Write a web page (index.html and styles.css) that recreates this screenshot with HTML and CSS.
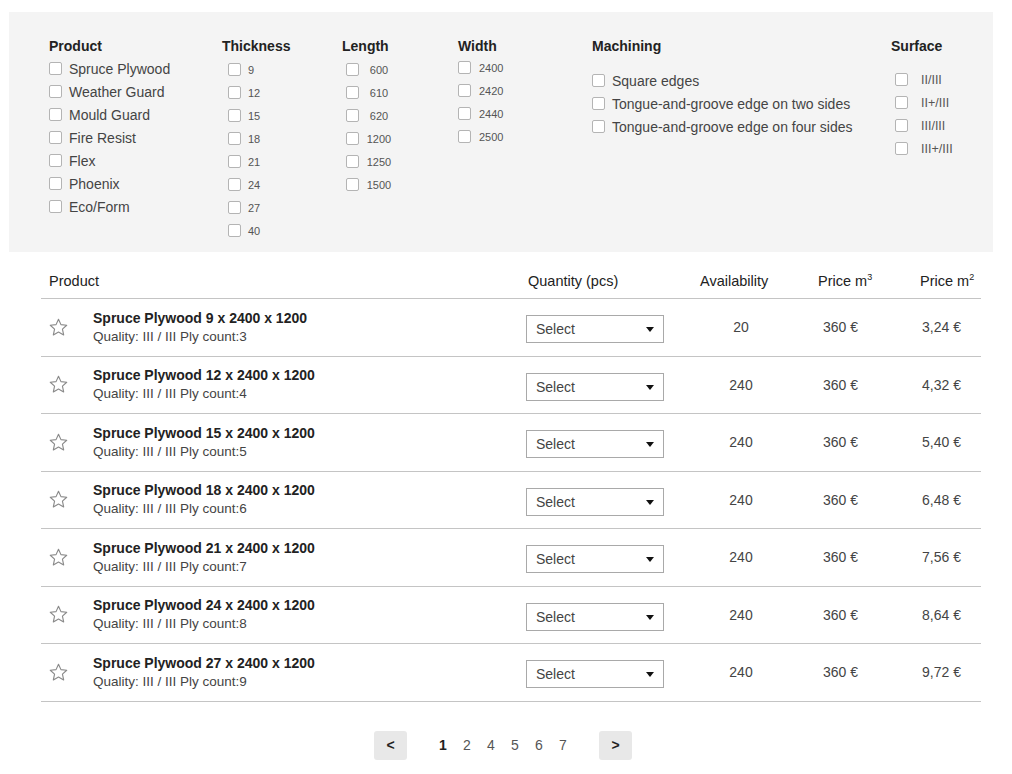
FILE: index.html
```html
<!DOCTYPE html>
<html lang="en">
<head>
<meta charset="utf-8">
<title>Plywood</title>
<link rel="stylesheet" href="styles.css">
</head>
<body>
<section class="filters">
  <div class="fcol col-product">
    <h3 class="fhead">Product</h3>
    <label class="opt"><input type="checkbox" class="cb"><span>Spruce Plywood</span></label>
    <label class="opt"><input type="checkbox" class="cb"><span>Weather Guard</span></label>
    <label class="opt"><input type="checkbox" class="cb"><span>Mould Guard</span></label>
    <label class="opt"><input type="checkbox" class="cb"><span>Fire Resist</span></label>
    <label class="opt"><input type="checkbox" class="cb"><span>Flex</span></label>
    <label class="opt"><input type="checkbox" class="cb"><span>Phoenix</span></label>
    <label class="opt"><input type="checkbox" class="cb"><span>Eco/Form</span></label>
  </div>
  <div class="fcol col-thick">
    <h3 class="fhead">Thickness</h3>
    <label class="opt small"><input type="checkbox" class="cb"><span>9</span></label>
    <label class="opt small"><input type="checkbox" class="cb"><span>12</span></label>
    <label class="opt small"><input type="checkbox" class="cb"><span>15</span></label>
    <label class="opt small"><input type="checkbox" class="cb"><span>18</span></label>
    <label class="opt small"><input type="checkbox" class="cb"><span>21</span></label>
    <label class="opt small"><input type="checkbox" class="cb"><span>24</span></label>
    <label class="opt small"><input type="checkbox" class="cb"><span>27</span></label>
    <label class="opt small"><input type="checkbox" class="cb"><span>40</span></label>
  </div>
  <div class="fcol col-length">
    <h3 class="fhead">Length</h3>
    <label class="opt small"><input type="checkbox" class="cb"><span>600</span></label>
    <label class="opt small"><input type="checkbox" class="cb"><span>610</span></label>
    <label class="opt small"><input type="checkbox" class="cb"><span>620</span></label>
    <label class="opt small"><input type="checkbox" class="cb"><span>1200</span></label>
    <label class="opt small"><input type="checkbox" class="cb"><span>1250</span></label>
    <label class="opt small"><input type="checkbox" class="cb"><span>1500</span></label>
  </div>
  <div class="fcol col-width">
    <h3 class="fhead">Width</h3>
    <div class="shift">
      <label class="opt small"><input type="checkbox" class="cb"><span>2400</span></label>
      <label class="opt small"><input type="checkbox" class="cb"><span>2420</span></label>
      <label class="opt small"><input type="checkbox" class="cb"><span>2440</span></label>
      <label class="opt small"><input type="checkbox" class="cb"><span>2500</span></label>
    </div>
  </div>
  <div class="fcol col-mach">
    <h3 class="fhead">Machining</h3>
    <div class="drop">
      <label class="opt"><input type="checkbox" class="cb"><span>Square edges</span></label>
      <label class="opt"><input type="checkbox" class="cb"><span>Tongue-and-groove edge on two sides</span></label>
      <label class="opt"><input type="checkbox" class="cb"><span>Tongue-and-groove edge on four sides</span></label>
    </div>
  </div>
  <div class="fcol col-surface">
    <h3 class="fhead">Surface</h3>
    <div class="drop-s">
      <label class="opt mid"><input type="checkbox" class="cb"><span>II/III</span></label>
      <label class="opt mid"><input type="checkbox" class="cb"><span>II+/III</span></label>
      <label class="opt mid"><input type="checkbox" class="cb"><span>III/III</span></label>
      <label class="opt mid"><input type="checkbox" class="cb"><span>III+/III</span></label>
    </div>
  </div>
</section>

<section class="table">
  <div class="thead">
    <div class="th th-product">Product</div>
    <div class="th th-qty">Quantity (pcs)</div>
    <div class="th th-avail">Availability</div>
    <div class="th th-p3">Price m<sup>3</sup></div>
    <div class="th th-p2">Price m<sup>2</sup></div>
  </div>

  <div class="row">
    <div class="star"><svg viewBox="0 0 24 24" width="21" height="21"><polygon points="12,2.6 14.8,8.7 21.4,9.4 16.5,13.9 17.9,20.5 12,17.2 6.1,20.5 7.5,13.9 2.6,9.4 9.2,8.7" fill="none" stroke="#8a8a8a" stroke-width="1.3" stroke-linejoin="round"/></svg></div>
    <div class="info"><div class="title">Spruce Plywood 9 x 2400 x 1200</div><div class="sub">Quality: III / III Ply count:3</div></div>
    <div class="qty"><div class="select">Select<span class="caret"></span></div></div>
    <div class="avail">20</div>
    <div class="p3">360 €</div>
    <div class="p2">3,24 €</div>
  </div>
  <div class="row">
    <div class="star"><svg viewBox="0 0 24 24" width="21" height="21"><polygon points="12,2.6 14.8,8.7 21.4,9.4 16.5,13.9 17.9,20.5 12,17.2 6.1,20.5 7.5,13.9 2.6,9.4 9.2,8.7" fill="none" stroke="#8a8a8a" stroke-width="1.3" stroke-linejoin="round"/></svg></div>
    <div class="info"><div class="title">Spruce Plywood 12 x 2400 x 1200</div><div class="sub">Quality: III / III Ply count:4</div></div>
    <div class="qty"><div class="select">Select<span class="caret"></span></div></div>
    <div class="avail">240</div>
    <div class="p3">360 €</div>
    <div class="p2">4,32 €</div>
  </div>
  <div class="row">
    <div class="star"><svg viewBox="0 0 24 24" width="21" height="21"><polygon points="12,2.6 14.8,8.7 21.4,9.4 16.5,13.9 17.9,20.5 12,17.2 6.1,20.5 7.5,13.9 2.6,9.4 9.2,8.7" fill="none" stroke="#8a8a8a" stroke-width="1.3" stroke-linejoin="round"/></svg></div>
    <div class="info"><div class="title">Spruce Plywood 15 x 2400 x 1200</div><div class="sub">Quality: III / III Ply count:5</div></div>
    <div class="qty"><div class="select">Select<span class="caret"></span></div></div>
    <div class="avail">240</div>
    <div class="p3">360 €</div>
    <div class="p2">5,40 €</div>
  </div>
  <div class="row">
    <div class="star"><svg viewBox="0 0 24 24" width="21" height="21"><polygon points="12,2.6 14.8,8.7 21.4,9.4 16.5,13.9 17.9,20.5 12,17.2 6.1,20.5 7.5,13.9 2.6,9.4 9.2,8.7" fill="none" stroke="#8a8a8a" stroke-width="1.3" stroke-linejoin="round"/></svg></div>
    <div class="info"><div class="title">Spruce Plywood 18 x 2400 x 1200</div><div class="sub">Quality: III / III Ply count:6</div></div>
    <div class="qty"><div class="select">Select<span class="caret"></span></div></div>
    <div class="avail">240</div>
    <div class="p3">360 €</div>
    <div class="p2">6,48 €</div>
  </div>
  <div class="row">
    <div class="star"><svg viewBox="0 0 24 24" width="21" height="21"><polygon points="12,2.6 14.8,8.7 21.4,9.4 16.5,13.9 17.9,20.5 12,17.2 6.1,20.5 7.5,13.9 2.6,9.4 9.2,8.7" fill="none" stroke="#8a8a8a" stroke-width="1.3" stroke-linejoin="round"/></svg></div>
    <div class="info"><div class="title">Spruce Plywood 21 x 2400 x 1200</div><div class="sub">Quality: III / III Ply count:7</div></div>
    <div class="qty"><div class="select">Select<span class="caret"></span></div></div>
    <div class="avail">240</div>
    <div class="p3">360 €</div>
    <div class="p2">7,56 €</div>
  </div>
  <div class="row">
    <div class="star"><svg viewBox="0 0 24 24" width="21" height="21"><polygon points="12,2.6 14.8,8.7 21.4,9.4 16.5,13.9 17.9,20.5 12,17.2 6.1,20.5 7.5,13.9 2.6,9.4 9.2,8.7" fill="none" stroke="#8a8a8a" stroke-width="1.3" stroke-linejoin="round"/></svg></div>
    <div class="info"><div class="title">Spruce Plywood 24 x 2400 x 1200</div><div class="sub">Quality: III / III Ply count:8</div></div>
    <div class="qty"><div class="select">Select<span class="caret"></span></div></div>
    <div class="avail">240</div>
    <div class="p3">360 €</div>
    <div class="p2">8,64 €</div>
  </div>
  <div class="row">
    <div class="star"><svg viewBox="0 0 24 24" width="21" height="21"><polygon points="12,2.6 14.8,8.7 21.4,9.4 16.5,13.9 17.9,20.5 12,17.2 6.1,20.5 7.5,13.9 2.6,9.4 9.2,8.7" fill="none" stroke="#8a8a8a" stroke-width="1.3" stroke-linejoin="round"/></svg></div>
    <div class="info"><div class="title">Spruce Plywood 27 x 2400 x 1200</div><div class="sub">Quality: III / III Ply count:9</div></div>
    <div class="qty"><div class="select">Select<span class="caret"></span></div></div>
    <div class="avail">240</div>
    <div class="p3">360 €</div>
    <div class="p2">9,72 €</div>
  </div>
</section>

<nav class="pager">
  <button class="pbtn">&lt;</button>
  <div class="pages">
    <span class="page current">1</span>
    <span class="page">2</span>
    <span class="page">4</span>
    <span class="page">5</span>
    <span class="page">6</span>
    <span class="page">7</span>
  </div>
  <button class="pbtn">&gt;</button>
</nav>
</body>
</html>
```

FILE: styles.css
```css
* { box-sizing: border-box; }

html, body {
  margin: 0;
  padding: 0;
  background: #ffffff;
}

body {
  font-family: "Liberation Sans", Arial, Helvetica, sans-serif;
  color: #3a3a3a;
  width: 1012px;
}

/* ---------- filter panel ---------- */
.filters {
  margin: 12px 0 0 9px;
  width: 984px;
  height: 240px;
  background: #f4f4f4;
  padding: 26px 0 0 40px;
  display: grid;
  grid-template-columns: 173px 120px 116px 134px 299px 1fr;
  align-items: start;
}

.fhead {
  margin: 0 0 4px 0;
  font-size: 14px;
  line-height: 16px;
  font-weight: bold;
  color: #222;
}

.opt {
  display: flex;
  align-items: center;
  height: 23px;
  font-size: 14px;
  color: #444;
  white-space: nowrap;
}

.cb {
  -webkit-appearance: none;
  appearance: none;
  margin: 0 7px 0 0;
  width: 13px;
  height: 13px;
  border: 1px solid #b4b4b4;
  border-radius: 2px;
  background: #fff;
  flex: none;
}

.opt.small { font-size: 11px; color: #555; }
.opt.mid { font-size: 12.5px; color: #555; }

.col-product .opt:first-of-type { margin-top: -1px; }
.col-thick .opt { padding-left: 6px; }
.col-length .opt { padding-left: 4px; }
.col-length .opt span { width: 26px; text-align: center; }
.col-width .shift { margin-top: -2px; }
.col-width .cb { margin-right: 8px; }
.col-mach .drop { margin-top: 15px; }
.col-surface .drop-s { margin-top: 14px; }
.col-surface .opt { padding-left: 4px; }
.col-surface .cb { margin-right: 13px; }

/* ---------- table ---------- */
.table {
  margin: 0 0 0 41px;
  width: 940px;
}

.thead, .row {
  display: grid;
  grid-template-columns: 52px 433px 164px 102px 128px 1fr;
}

.thead {
  height: 47px;
  border-bottom: 1px solid #c4c4c4;
  align-items: end;
  padding-bottom: 8px;
  font-size: 14.5px;
  line-height: 18px;
  color: #222;
}

.th sup { font-size: 9px; line-height: 0; vertical-align: 6px; }

.th-product { grid-column: 1 / 3; padding-left: 8px; }
.th-qty { padding-left: 2px; }
.th-avail { padding-left: 10px; }
.th-p3 { padding-left: 26px; }
.th-p2 { padding-left: 0; }

.row {
  height: 57.5px;
  border-bottom: 1px solid #c4c4c4;
  align-items: center;
  font-size: 14px;
  color: #444;
}

.star {
  padding-left: 7px;
  display: flex;
  align-items: center;
}

.title {
  font-size: 14px;
  line-height: 16px;
  font-weight: bold;
  color: #222;
}

.sub {
  margin-top: 3px;
  font-size: 13.5px;
  line-height: 16px;
  color: #444;
}

.select {
  position: relative;
  margin-top: 4px;
  width: 138px;
  height: 28px;
  border: 1px solid #a9a9a9;
  background: #fff;
  padding-left: 9px;
  font-size: 14px;
  line-height: 26px;
  color: #444;
}

.caret {
  position: absolute;
  right: 9px;
  top: 11px;
  width: 0;
  height: 0;
  border-left: 4px solid transparent;
  border-right: 4px solid transparent;
  border-top: 5px solid #111;
}

.avail { text-align: center; }
.p3 { padding-left: 31px; }
.p2 { padding-left: 2px; }

/* ---------- pager ---------- */
.pager {
  display: flex;
  justify-content: center;
  align-items: center;
  margin-top: 29px;
  padding-right: 6px;
}

.pbtn {
  width: 33px;
  height: 29px;
  border: none;
  border-radius: 3px;
  background: #e8e8e8;
  font-family: "Liberation Sans", Arial, sans-serif;
  font-size: 14px;
  font-weight: bold;
  color: #222;
  padding: 0;
}

.pages {
  display: flex;
  margin: 0 24px;
}

.page {
  width: 24px;
  text-align: center;
  font-size: 14px;
  color: #555;
}

.page.current {
  font-weight: bold;
  color: #222;
}
```
